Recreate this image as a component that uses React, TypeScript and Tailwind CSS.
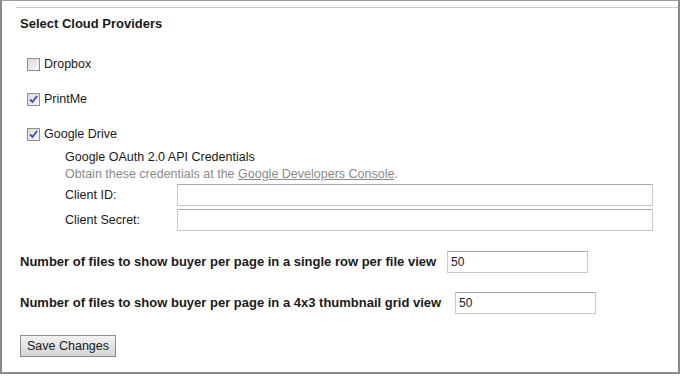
import React from "react";

// Old-style checkbox drawn by hand so it matches the grey Windows look
function Check({ checked }: { checked?: boolean }) {
    return (
        <span className="inline-flex w-[13px] h-[13px] border border-[#8f8f8f] bg-gradient-to-br from-[#dcdcdc] to-[#f6f6f6] items-center justify-center shrink-0">
            {checked && (
                <svg width="9" height="9" viewBox="0 0 9 9">
                    <path d="M1 4.5 L3.5 7 L8 1" fill="none" stroke="#3c4fa8" strokeWidth="1.8" />
                </svg>
            )}
        </span>
    );
}

function Provider({ label, checked }: { label: string; checked?: boolean }) {
    return (
        <label className="flex items-center gap-[4px] h-[16px]">
            <Check checked={checked} />
            <span>{label}</span>
        </label>
    );
}

function TextInput({ value, className }: { value?: string; className: string }) {
    return (
        <div className={`h-[22px] border border-[#c8c8c8] border-t-[#a9a9a9] bg-white flex items-center px-[3px] text-[12px] text-[#222] ${className}`}>
            {value}
        </div>
    );
}

export default function App() {
    return (
        <div className="w-[680px] h-[377px] bg-white" style={{ fontFamily: '"Liberation Sans", Arial, sans-serif' }}>
            <div className="w-[680px] h-[374px] border-l-2 border-r-2 border-b-2 border-t border-[#8a8a8a] border-t-[#9a9a9a] text-[12.5px] text-[#1a1a1a]">
                <div className="ml-[14px] mt-[6px] h-px bg-[#c9c9c9]" />
                <div className="pl-[18px] pt-[9px]">
                    <div className="font-bold text-[13px] h-[14px] leading-[14px]">Select Cloud Providers</div>

                    <div className="pl-[7px] mt-[25px] flex flex-col gap-[19px]">
                        <Provider label="Dropbox" />
                        <Provider label="PrintMe" checked />
                        <Provider label="Google Drive" checked />
                    </div>

                    <div className="pl-[45px] mt-[7px]">
                        <div className="h-[17px] leading-[17px]">Google OAuth 2.0 API Credentials</div>
                        <div className="h-[17px] leading-[17px] text-[#8a8a8a]">
                            Obtain these credentials at the <span className="underline">Google Developers Console</span>.
                        </div>
                        <div className="flex flex-col gap-[3px] mt-[1px]">
                            <div className="flex items-center">
                                <span className="w-[112px]">Client ID:</span>
                                <TextInput className="w-[476px]" />
                            </div>
                            <div className="flex items-center">
                                <span className="w-[112px]">Client Secret:</span>
                                <TextInput className="w-[476px]" />
                            </div>
                        </div>
                    </div>

                    <div className="flex items-center mt-[20px]">
                        <span className="font-bold text-[13px] w-[427px]">Number of files to show buyer per page in a single row per file view</span>
                        <TextInput value="50" className="w-[141px]" />
                    </div>
                    <div className="flex items-center mt-[19px]">
                        <span className="font-bold text-[13px] w-[435px]">Number of files to show buyer per page in a 4x3 thumbnail grid view</span>
                        <TextInput value="50" className="w-[141px]" />
                    </div>

                    <button className="mt-[21px] h-[22px] w-[96px] border border-[#8c8c8c] bg-gradient-to-b from-[#f2f2f2] to-[#d4d4d4] text-[12.5px] text-[#1a1a1a]">
                        Save Changes
                    </button>
                </div>
            </div>
        </div>
    );
}
